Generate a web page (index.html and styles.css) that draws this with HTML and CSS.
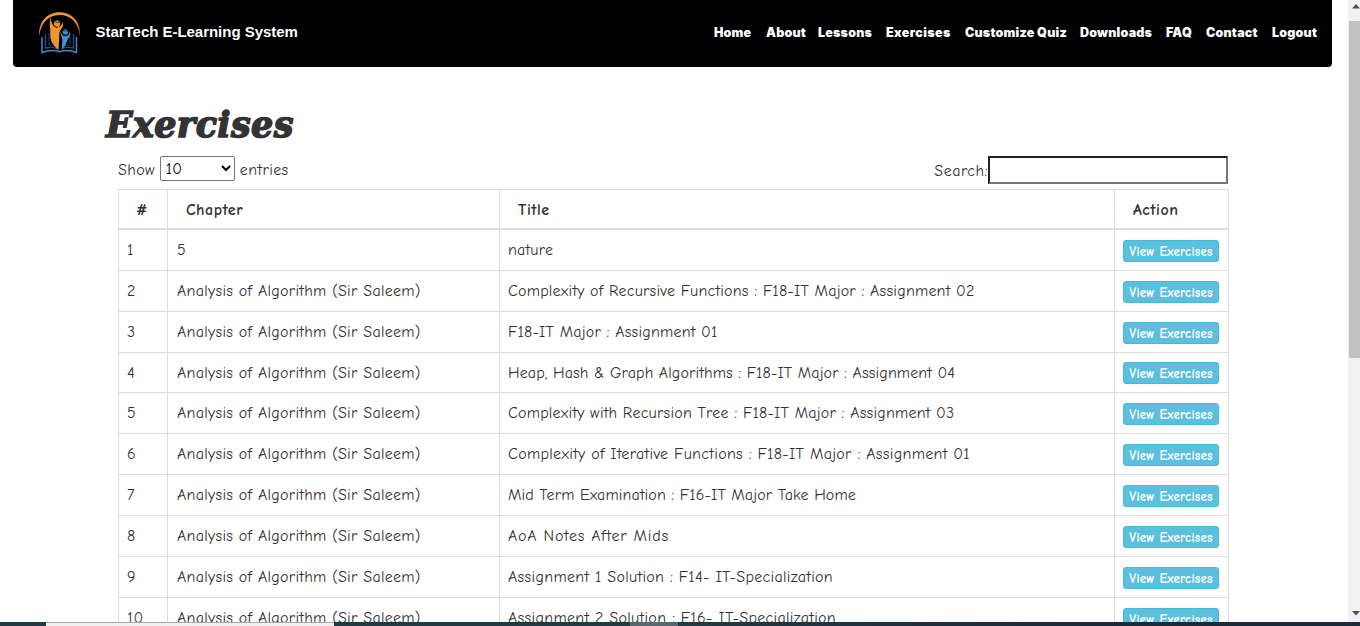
FILE: index.html
```html
<!DOCTYPE html>
<html lang="en">
<head>
<meta charset="utf-8">
<title>StarTech E-Learning System</title>
<link rel="stylesheet" href="styles.css">
</head>
<body>
<div class="window">
  <div class="viewport">
    <div class="page">
      <header class="navbar">
        <div class="brand">
          <svg class="logo" viewBox="0 0 44 44">
            <path d="M1.300 25C.2 11 9 1.200 21.500 1.200S43 11 41.800 25C41 12 33 4 21.500 4S2.300 13 1.300 25z" fill="#ee9436"/>
            <path d="M4 26v15.500q10-3.500 17.500-.8q7.500-2.700 17 .8V26" fill="none" stroke="#3f8ac8" stroke-width="1.500"/>
            <path d="M7.500 23v14q8-1.500 12 1M35.500 23v14q-8-1.500-12 1" fill="none" stroke="#1d4f92" stroke-width="1.300"/>
            <path d="M11 22v12q5 0 8 3M32 22v12q-5 0-8 3" fill="none" stroke="#143468" stroke-width="1.200"/>
            <path d="M12.300 6.500c1 4.500 2 7.500 4.200 9.300c2 1.500 4.500.5 6.200-1c1.200-1 1.500-2.500 1.300-3.800c2 2.500.8 5.500-1.200 7.500c-1.800 2-1.500 6-1.600 9l-.7 11.500c-5-4-8.500-9-8.200-15c.2-6-1-10.500 0-17.500z" fill="#f1942d"/>
            <circle cx="19" cy="12.800" r="3.200" fill="#f1942d"/>
            <path d="M15.200 10.300q4 2.500 9.500-.2M15.800 14q1.500 2.600 4 2.300" fill="none" stroke="#1d1006" stroke-width=".8"/>
            <path d="M22.600 20c1 4 2.500 5 5 5.300c2.500-.3 4-2 3.500-5c1.800 3 .3 6-1.300 8c-1.500 3.500-2.500 7-5.800 10c-.5-5 1-9-.2-12c-.9-2-1.500-4-1.200-6.300z" fill="#3d96d2"/>
            <circle cx="27.300" cy="21" r="2.700" fill="#3d96d2"/>
            <path d="M24.500 19.400q3 1.500 6.500 0M24.800 22.500q1 1.800 3 1.700" fill="none" stroke="#06131f" stroke-width=".7"/>
          </svg>
          <span class="brand-name">StarTech E-Learning System</span>
        </div>
        <nav class="nav">
          <a class="w38">Home</a><a class="w38">About</a><a class="w54">Lessons</a><a class="w65">Exercises</a><a class="w101">Customize Quiz</a><a class="w72">Downloads</a><a class="w26">FAQ</a><a class="w52">Contact</a><a class="w45">Logout</a>
        </nav>
      </header>
      <main class="content">
        <h1 class="heading">Exercises</h1>
        <div class="controls">
          <label class="length">Show
            <select class="select"><option>10</option><option>25</option></select>
            entries</label>
          <label class="filter">Search:<input class="search" type="text"></label>
        </div>
        <table class="table">
          <colgroup><col class="c-num"><col class="c-chapter"><col class="c-title"><col class="c-action"></colgroup>
          <thead><tr><th>#</th><th>Chapter</th><th>Title</th><th>Action</th></tr></thead>
          <tbody>
            <tr class="first"><td>1</td><td>5</td><td>nature</td><td><a class="btn">View Exercises</a></td></tr>
            <tr><td>2</td><td>Analysis of Algorithm (Sir Saleem)</td><td>Complexity of Recursive Functions : F18-IT Major : Assignment 02</td><td><a class="btn">View Exercises</a></td></tr>
            <tr><td>3</td><td>Analysis of Algorithm (Sir Saleem)</td><td>F18-IT Major : Assignment 01</td><td><a class="btn">View Exercises</a></td></tr>
            <tr class="short"><td>4</td><td>Analysis of Algorithm (Sir Saleem)</td><td class="tight">Heap, Hash &amp; Graph Algorithms : F18-IT Major : Assignment 04</td><td><a class="btn">View Exercises</a></td></tr>
            <tr><td>5</td><td>Analysis of Algorithm (Sir Saleem)</td><td>Complexity with Recursion Tree : F18-IT Major : Assignment 03</td><td><a class="btn">View Exercises</a></td></tr>
            <tr><td>6</td><td>Analysis of Algorithm (Sir Saleem)</td><td class="loose">Complexity of Iterative Functions : F18-IT Major : Assignment 01</td><td><a class="btn">View Exercises</a></td></tr>
            <tr><td>7</td><td>Analysis of Algorithm (Sir Saleem)</td><td class="tight">Mid Term Examination : F16-IT Major Take Home</td><td><a class="btn">View Exercises</a></td></tr>
            <tr><td>8</td><td>Analysis of Algorithm (Sir Saleem)</td><td class="looser">AoA Notes After Mids</td><td><a class="btn">View Exercises</a></td></tr>
            <tr><td>9</td><td>Analysis of Algorithm (Sir Saleem)</td><td class="loose">Assignment 1 Solution : F14- IT-Specialization</td><td><a class="btn">View Exercises</a></td></tr>
            <tr><td>10</td><td>Analysis of Algorithm (Sir Saleem)</td><td class="loose">Assignment 2 Solution : F16- IT-Specialization</td><td><a class="btn">View Exercises</a></td></tr>
          </tbody>
        </table>
      </main>
    </div>
    <div class="scrollbar">
      <svg class="arrow" viewBox="0 0 12 21"><path d="M4 8.500h8L8 4z" fill="#505050"/></svg>
      <div class="thumb"></div>
      <svg class="arrow" viewBox="0 0 12 21"><path d="M4 10h8l-4 4.500z" fill="#505050"/></svg>
    </div>
  </div>
  <div class="taskbar"><div class="task-search"></div><div class="task-active"></div></div>
</div>
</body>
</html>
```
FILE: styles.css
```css
* { box-sizing: border-box; }
body { margin: 0; background: #fff; color: #333; font-family: "Comic Neue", Lato, sans-serif; font-size: 16px; overflow: hidden; }
.window { width: 1360px; height: 626px; display: flex; flex-direction: column; overflow: hidden; }
.viewport { height: 622px; display: flex; overflow: hidden; flex: none; }
.page { width: 1348px; padding-left: 13px; overflow: hidden; }
.navbar { width: 1319px; height: 67px; background: #000; border-radius: 0 0 4px 4px; display: flex; justify-content: space-between; align-items: flex-start; padding: 11px 15px 0 25px; color: #fff; }
.brand { display: flex; gap: 13.5px; }
.logo { width: 44px; height: 44px; }
.brand-name { font: bold 15px/42px "Liberation Sans", sans-serif; letter-spacing: -.03px; white-space: nowrap; }
.nav { display: flex; gap: 14px; font: 900 12.500px/43px Inter, sans-serif; letter-spacing: .2px; }
.nav a { white-space: nowrap; }
.w38 { width: 38px; }
.w54 { width: 54px; }
.w65 { width: 65px; letter-spacing: .4px; }
.w101 { width: 101px; }
.w72 { width: 72px; }
.w26 { width: 26px; }
.w52 { width: 52px; }
.w45 { width: 45px; }
.content { width: 1215px; padding-left: 105px; }
.heading { margin: 35px 0 0 -12px; height: 54px; font: italic bold 35px/46px "Cooper Black", "DejaVu Serif", serif; letter-spacing: .35px; -webkit-text-stroke: 1.500px #333; }
.controls { display: flex; justify-content: space-between; height: 33px; line-height: 28px; }
.length { display: flex; gap: 5px; letter-spacing: .38px; }
.select { width: 75px; height: 25px; border: 1px solid #767676; border-radius: 2px; background: #fff; color: #000; font: inherit; padding: 0 0 0 1px; }
.filter { display: flex; line-height: 30px; letter-spacing: .5px; }
.search { width: 240px; height: 28px; border: 2px inset #767676; padding: 1px 2px; background: #fff; }
.table { width: 1111px; table-layout: fixed; border-collapse: collapse; border: 1px solid #ddd; }
.c-num { width: 49px; }
.c-chapter { width: 332px; }
.c-title { width: 615px; }
.c-action { width: 114px; }
.table th, .table td { border: 1px solid #ddd; white-space: nowrap; text-align: left; height: 41px; padding: 0 8px; line-height: 24px; letter-spacing: .21px; }
.table th { height: 39px; padding: 3px 0 0 18px; border-bottom-width: 2px; letter-spacing: .5px; }
.table th:first-child { padding-left: 17px; }
.table .first td { height: 42px; padding-top: 1px; padding-bottom: 0; }
.table .short td { height: 40px; }
.table td:nth-child(2) { padding-left: 9px; letter-spacing: .28px; }
.table td.tight { letter-spacing: .12px; }
.table td.loose { letter-spacing: .31px; }
.table td.looser { letter-spacing: .79px; }
.btn { display: block; width: 96px; height: 22px; margin-top: 2px; border: 1px solid #46b8da; border-radius: 3px; background: #5bc0de; color: #fff; font-size: 13px; font-weight: bold; line-height: 22px; text-align: center; letter-spacing: .17px; }
.short .btn { margin-top: 1px; }
.scrollbar { width: 12px; background: #f1f1f1; display: flex; flex-direction: column; }
.arrow { width: 12px; height: 21px; }
.thumb { height: 337px; margin: 0 0 243px 1px; background: #c1c1c1; }
.taskbar { height: 4px; padding-left: 46px; display: flex; background: linear-gradient(90deg, #203a43, #203a43 50%, #1c293b 80%); }
.task-search { width: 288px; background: #f0f0f0; border-top: 1px solid #aaa; }
.task-active { width: 48px; margin-left: 296px; background: #566970; }
```
